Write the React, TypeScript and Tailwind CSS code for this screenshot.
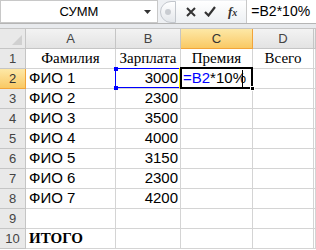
import React from 'react';

const rows: { name: string; salary: string }[] = [
  { name: 'ФИО 1', salary: '3000' },
  { name: 'ФИО 2', salary: '2300' },
  { name: 'ФИО 3', salary: '3500' },
  { name: 'ФИО 4', salary: '4000' },
  { name: 'ФИО 5', salary: '3150' },
  { name: 'ФИО 6', salary: '2300' },
  { name: 'ФИО 7', salary: '4200' },
];

const gridCols = 'grid grid-cols-[26px_90px_65px_72px_61px_1fr]';
const cell = 'h-5 border-r border-b border-[#d4d4d4] bg-white';
const sans = "font-['Liberation_Sans',Arial,sans-serif]";
const serif = "font-['Liberation_Serif','Times_New_Roman',serif]";

const ColHeader = ({ label, active }: { label: string; active?: boolean }) => (
  <div
    className={`flex h-5 items-center justify-center border-r border-b text-[13px] ${sans} ${
      active
        ? 'border-[#f2a43a] bg-gradient-to-b from-[#fde8a6] to-[#f9c963] text-[#333]'
        : 'border-[#c5c5c5] bg-gradient-to-b from-[#f3f3f3] to-[#e3e3e3] text-[#444]'
    }`}
  >
    {label}
  </div>
);

const RowHeader = ({ n, active }: { n: number; active?: boolean }) => (
  <div
    className={`flex h-5 items-center justify-center border-r border-b text-[13px] ${sans} ${
      active
        ? 'border-[#f2a43a] bg-gradient-to-b from-[#fde8a6] to-[#f9c963] text-[#333]'
        : 'border-[#c5c5c5] bg-[#e9e9e9] text-[#444]'
    }`}
  >
    {n}
  </div>
);

export default function App() {
  return (
    <div className="h-[250px] w-[316px] overflow-hidden bg-white">
      {/* formula bar */}
      <div className="flex h-[24px] border-b border-[#b5b5b5] bg-[#eef0f3]">
        <div className={`relative flex w-[158px] items-center justify-center border border-[#c8c8c8] bg-white text-[13px] text-black ${sans}`}>
          СУММ
          <svg className="absolute right-[5px] top-[9px]" width="8" height="5" viewBox="0 0 8 5">
            <path d="M0 0h7L3.5 4z" fill="#333" />
          </svg>
        </div>
        <div className="flex items-center">
          <div className="ml-[2px] flex h-[22px] w-[16px] items-center justify-center rounded-l-full border border-[#c3c7cd] bg-gradient-to-b from-white to-[#e4e7eb]">
            <div className="h-[6px] w-[6px] rounded-full bg-[#c9ccd1]" />
          </div>
          <div className="flex h-[22px] items-center gap-[8px] bg-gradient-to-b from-white to-[#edf0f3] pl-[10px] pr-[9px]">
            <svg width="10" height="10" viewBox="0 0 10 10">
              <path d="M1 1l8 8M9 1l-8 8" stroke="#333" strokeWidth="2" />
            </svg>
            <svg width="12" height="11" viewBox="0 0 12 11">
              <path d="M1 6l3.5 3.5L11 1" stroke="#333" strokeWidth="2.2" fill="none" />
            </svg>
            <span className={`ml-[4px] text-[13px] font-bold italic text-[#333] ${serif}`}>
              f<span className="text-[10px]">x</span>
            </span>
          </div>
        </div>
        <div className={`flex flex-1 items-center border-l border-[#c8c8c8] bg-white pl-[4px] text-[14px] text-black ${sans}`}>
          =B2*10%
        </div>
      </div>
      <div className="h-[4px] bg-[#e8eaed]" />

      {/* sheet */}
      <div className={`${gridCols} border-t border-[#c5c5c5]`}>
        <div className="relative h-5 border-r border-b border-[#c5c5c5] bg-[#e9e9e9]">
          <svg className="absolute bottom-[3px] right-[3px]" width="10" height="10" viewBox="0 0 10 10">
            <path d="M10 0V10H0z" fill="#d0d0d0" />
          </svg>
        </div>
        <ColHeader label="A" />
        <ColHeader label="B" />
        <ColHeader label="C" active />
        <ColHeader label="D" />
        <ColHeader label="" />

        <RowHeader n={1} />
        <div className={`${cell} ${serif} flex items-center justify-center text-[15px] text-black`}>Фамилия</div>
        <div className={`${cell} ${serif} flex items-center justify-center text-[15px] text-black`}>Зарплата</div>
        <div className={`${cell} ${serif} flex items-center justify-center text-[15px] text-black`}>Премия</div>
        <div className={`${cell} ${serif} flex items-center justify-center text-[15px] text-black`}>Всего</div>
        <div className={cell} />

        {rows.map((r, i) => (
          <React.Fragment key={r.name}>
            <RowHeader n={i + 2} active={i === 0} />
            <div className={`${cell} ${sans} flex items-center pl-[3px] text-[15px] text-black`}>{r.name}</div>
            <div className={`${cell} ${sans} relative flex items-center justify-end pr-[2px] text-[15px] text-black`}>
              {r.salary}
              {i === 0 && (
                <>
                  <div className="pointer-events-none absolute -left-px -top-px bottom-0 right-[-1px] z-10 border border-[#0000ff]" />
                  <div className="absolute -left-[2px] -top-[2px] z-10 h-[4px] w-[4px] bg-[#0000ff]" />
                  <div className="absolute -bottom-[2px] -left-[2px] z-10 h-[4px] w-[4px] bg-[#0000ff]" />
                  <div className="absolute -right-[1px] -top-px bottom-0 z-10 w-[2px] bg-[#ffee00]" />
                </>
              )}
            </div>
            <div className={`${cell} ${sans} relative flex items-center pl-[2px] text-[15px] text-black`}>
              {i === 0 && (
                <>
                  <span className="text-[#0000ff]">=B2</span>
                  <span>*10%</span>
                  <div className="absolute right-[9px] top-[1px] h-[17px] w-px bg-black" />
                  <div className="pointer-events-none absolute -left-px -top-[2px] -bottom-px -right-px z-20 border-2 border-black" />
                  <div className="absolute -bottom-[3px] -right-[3px] z-20 h-[5px] w-[5px] border border-white bg-black" />
                </>
              )}
            </div>
            <div className={cell} />
            <div className={cell} />
          </React.Fragment>
        ))}

        <RowHeader n={9} />
        <div className={cell} />
        <div className={cell} />
        <div className={cell} />
        <div className={cell} />
        <div className={cell} />

        <RowHeader n={10} />
        <div className={`${cell} ${serif} flex items-center pl-[3px] text-[15px] font-bold text-black`}>ИТОГО</div>
        <div className={cell} />
        <div className={cell} />
        <div className={cell} />
        <div className={cell} />
      </div>
    </div>
  );
}
